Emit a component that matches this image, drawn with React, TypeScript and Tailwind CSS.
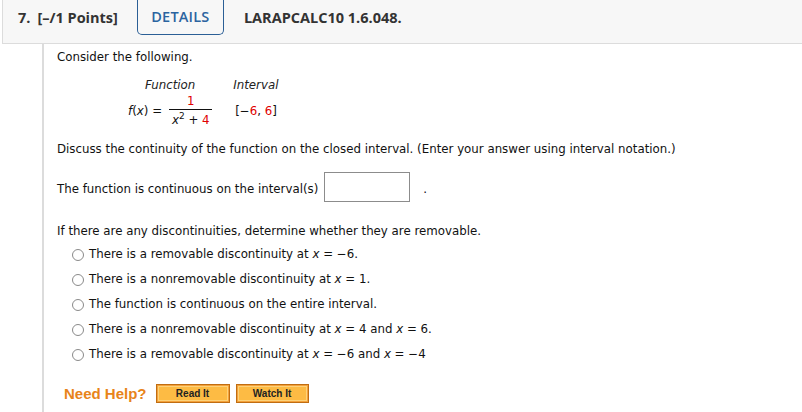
import React from "react";

const Radio = () => (
  <span className="inline-block w-[12px] h-[12px] rounded-full border border-[#8a8a8a] bg-white mr-[5px] shrink-0" />
);

const X = () => <i className="font-normal">x</i>;

const Opt = ({ children }: { children: React.ReactNode }) => (
  <div className="flex items-center h-[25px] pl-[15px]">
    <Radio />
    <span>{children}</span>
  </div>
);

export default function App() {
  return (
    <div className="w-[802px] h-[412px] bg-white overflow-hidden pl-[2px]">
      <div className="h-[44px] bg-[#f7f7f7] border-l border-b border-[#dcdcdc] flex items-start font-['Open_Sans',sans-serif] text-[14.5px] font-bold text-[#333]">
        <div className="pl-[15px] pt-[7px] flex gap-[7px]">
          <span>7.</span>
          <span>[–/1 Points]</span>
        </div>
        <div className="ml-[19px] w-[87px] h-[35px] border border-t-0 border-[#2b5f96] rounded-b-[5px] flex items-center justify-center text-[#2b64a0] font-semibold tracking-[0.2px]">
          DETAILS
        </div>
        <div className="ml-[20px] pt-[7px]">LARAPCALC10 1.6.048.</div>
      </div>
      <div className="ml-[40px] border-l-2 border-[#dcdcdc] h-[368px] pl-[13px] font-['DejaVu_Sans',sans-serif] text-[11.8px] leading-[17px] text-[#111]">
        <div className="pt-[5px] h-[22px]">Consider the following.</div>
        <div className="flex mt-[11px]">
          <div className="w-[71px] shrink-0" />
          <div className="flex flex-col items-center">
            <div className="italic text-[#222] h-[17px]">Function</div>
            <div className="flex items-center">
              <span className="mr-[4px]"><i>f</i>(<i>x</i>)</span>
              <span className="mr-[7px]">=</span>
              <span className="inline-flex flex-col items-center">
                <span className="text-[#e00000] leading-[15px]">1</span>
                <span className="border-t border-[#111] w-[43px] leading-[15px] text-center pt-[3px]">
                  <i>x</i><span className="text-[9px] relative -top-[5px]">2</span> + <span className="text-[#e00000]">4</span>
                </span>
              </span>
            </div>
          </div>
          <div className="flex flex-col ml-[21px]">
            <div className="italic text-[#222] h-[17px]">Interval</div>
            <div className="h-[34px] flex items-center ml-[2px]">
              <span>[−<span className="text-[#e00000]">6</span>, <span className="text-[#e00000]">6</span>]</span>
            </div>
          </div>
        </div>
        <div className="mt-[12px] h-[17px]">
          Discuss the continuity of the function on the closed interval. (Enter your answer using interval notation.)
        </div>
        <div className="flex items-center mt-[14px]">
          <span className="pt-[4px]">The function is continuous on the interval(s)</span>
          <span className="ml-[6px] w-[86px] h-[30px] border border-[#8c8c8c] bg-white" />
          <span className="ml-[13px] pt-[4px]">.</span>
        </div>
        <div className="mt-[21px] h-[17px]">If there are any discontinuities, determine whether they are removable.</div>
        <div className="mt-[2px]">
          <Opt>There is a removable discontinuity at <X /> = −6.</Opt>
          <Opt>There is a nonremovable discontinuity at <X /> = 1.</Opt>
          <Opt>The function is continuous on the entire interval.</Opt>
          <Opt>There is a nonremovable discontinuity at <X /> = 4 and <X /> = 6.</Opt>
          <Opt>There is a removable discontinuity at <X /> = −6 and <X /> = −4</Opt>
        </div>
        <div className="flex items-center mt-[17px] pl-[7px] font-['Liberation_Sans',sans-serif]">
          <span className="text-[#e8841a] font-bold text-[15px] leading-[19px] mr-[9px]">Need Help?</span>
          <span className="w-[74px] h-[19px] border border-[#c06d12] bg-[#f3a13a] p-[1px] mr-[6px]">
            <span className="flex items-center justify-center w-full h-full bg-[#fdbb44] border border-[#fdd27a] text-[10px] leading-[12px] font-bold text-[#222]">Read It</span>
          </span>
          <span className="w-[73px] h-[19px] border border-[#c06d12] bg-[#f3a13a] p-[1px]">
            <span className="flex items-center justify-center w-full h-full bg-[#fdbb44] border border-[#fdd27a] text-[10px] leading-[12px] font-bold text-[#222]">Watch It</span>
          </span>
        </div>
      </div>
    </div>
  );
}
